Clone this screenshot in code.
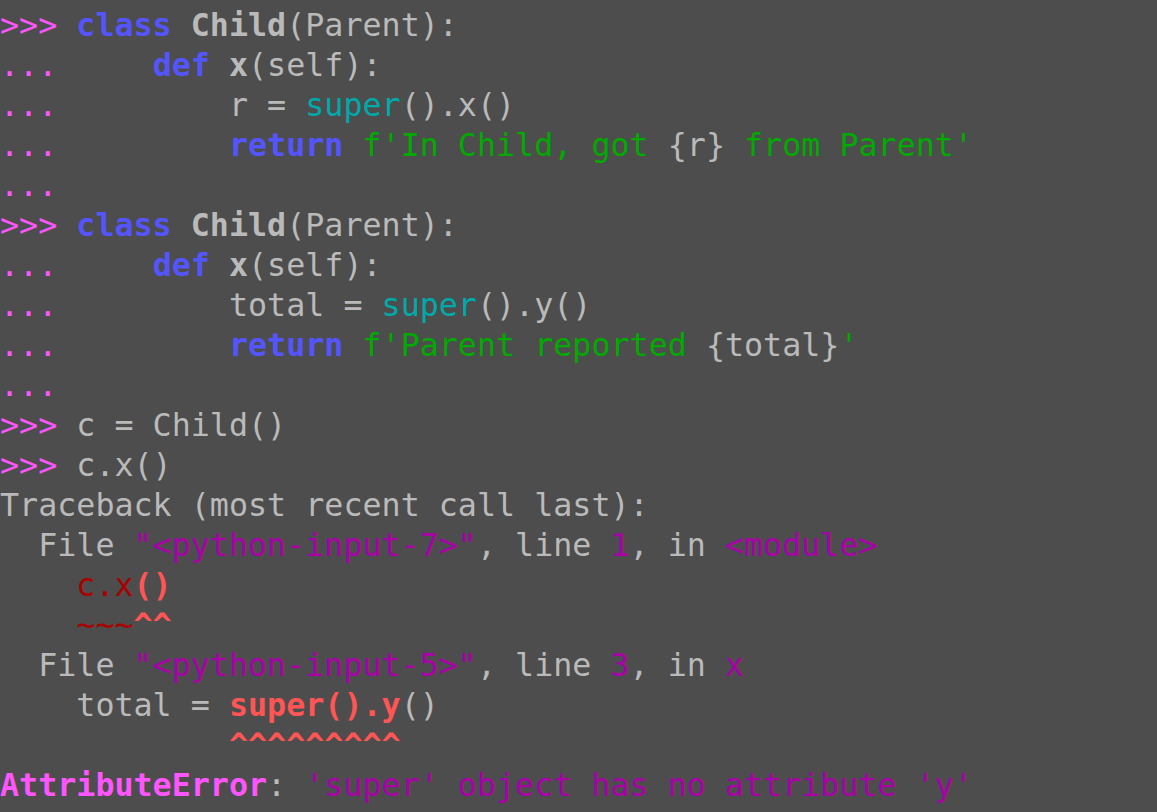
import React from "react";

type Seg = [string, string?];

const P = "text-[#ff55ff]";
const KW = "text-[#5555ff] font-bold";
const B = "font-bold";
const CY = "text-[#00aaaa]";
const GR = "text-[#00aa00]";
const MG = "text-[#aa00aa]";
const RD = "text-[#aa0000]";
const BR = "text-[#ff5555] font-bold";

const lines: Seg[][] = [
    [[">>> ", P], ["class", KW], [" "], ["Child", B], ["(Parent):"]],
    [["...", P], ["     "], ["def", KW], [" "], ["x", B], ["(self):"]],
    [["...", P], ["         r = "], ["super", CY], ["().x()"]],
    [["...", P], ["         "], ["return", KW], [" "], ["f'In Child, got ", GR], ["{r}"], [" from Parent'", GR]],
    [["...", P]],
    [[">>> ", P], ["class", KW], [" "], ["Child", B], ["(Parent):"]],
    [["...", P], ["     "], ["def", KW], [" "], ["x", B], ["(self):"]],
    [["...", P], ["         total = "], ["super", CY], ["().y()"]],
    [["...", P], ["         "], ["return", KW], [" "], ["f'Parent reported ", GR], ["{total}"], ["'", GR]],
    [["...", P]],
    [[">>> ", P], ["c = Child()"]],
    [[">>> ", P], ["c.x()"]],
    [["Traceback (most recent call last):"]],
    [["  File "], ["\"<python-input-7>\"", MG], [", line "], ["1", MG], [", in "], ["<module>", MG]],
    [["    "], ["c.x", RD], ["()", BR]],
    [["    "], ["~~~", RD], ["^^", BR]],
    [["  File "], ["\"<python-input-5>\"", MG], [", line "], ["3", MG], [", in "], ["x", MG]],
    [["    total = "], ["super().y", BR], ["()"]],
    [["            "], ["^^^^^^^^^", BR]],
    [["AttributeError", "text-[#ff55ff] font-bold"], [": "], ["'super' object has no attribute 'y'", MG]],
];

export default function App() {
    return (
        <div className="w-[1157px] h-[812px] overflow-hidden bg-[#4d4d4d] pt-[5px] text-[#bababa] text-[31.7px] leading-[40px] font-['DejaVu_Sans_Mono',monospace]">
            {lines.map((line, i) => (
                <div key={i} className="whitespace-pre h-[40px]">
                    {line.map(([t, c], j) => (
                        <span key={j} className={c}>{t}</span>
                    ))}
                </div>
            ))}
        </div>
    );
}
